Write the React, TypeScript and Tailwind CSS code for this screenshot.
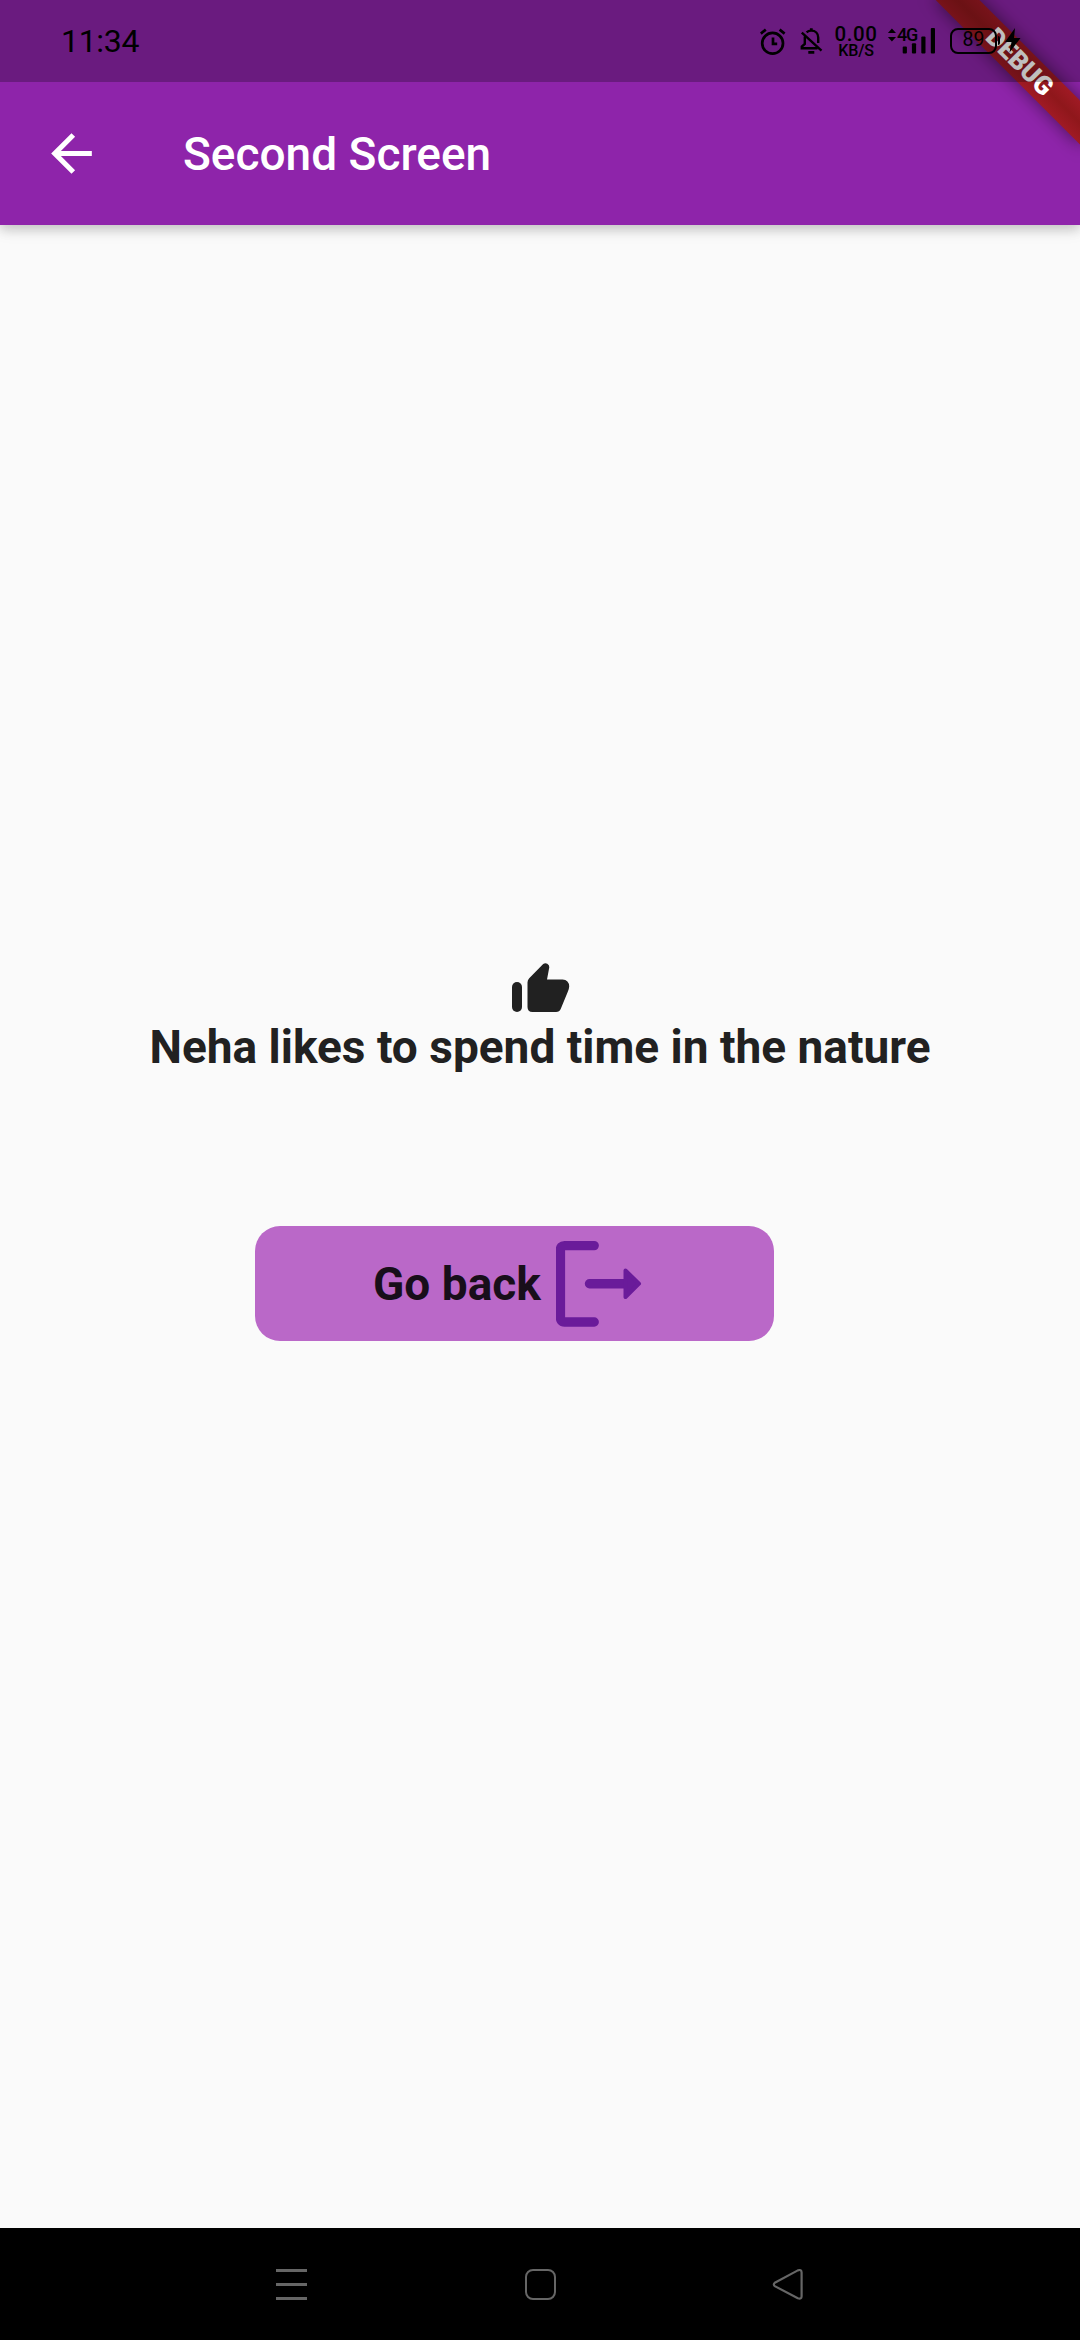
import React from "react";

function StatusBar() {
  return (
    <div className="relative z-20 flex h-[82px] items-start bg-black/25 text-black">
      <span className="ml-[61px] mt-[22px] w-[99px] text-[32px] leading-[38px] -tracking-[0.3px]">11:34</span>
      <div className="ml-[600px] mt-[27px] flex items-start">
        <svg width="26" height="30" viewBox="0 0 26 30" fill="none" stroke="currentColor" strokeWidth="2.7">
          <circle cx="12.6" cy="16.3" r="10.4" />
          <path d="M13 10.5V16.8H17.2M.8 6.6 5.8 2.6M24.6 6.6 19.6 2.6" />
        </svg>
        <svg className="ml-[14px]" width="24" height="30" viewBox="0 0 24 30" fill="none" stroke="currentColor" strokeWidth="2.4">
          <path d="M6.6 5.4C8 4 9.4 3.6 11.3 3.6C15.4 3.6 18.2 6.6 18.2 10.5V16M4.8 9.5V17L1.8 19.6V21.2H17.5M1.8 5.6 21.5 23.6" />
          <path d="M11.3 1.2V4M8.3 25.4H14.3" strokeWidth="2.8" />
        </svg>
        <div className="ml-[10px] flex w-[44px] flex-col items-center font-medium">
          <span className="text-[20.5px] leading-[15px] tracking-[0.6px]">0.00</span>
          <span className="mt-[3px] text-[16px] leading-[12px] -tracking-[0.2px]">KB/S</span>
        </div>
        <div className="relative ml-[9px] h-[28px] w-[50px]">
          <svg width="50" height="28" viewBox="0 0 50 28" fill="currentColor">
            <path d="M4.9 1.5 9 6H.9ZM4.9 14.5 9 10H.9Z" />
            <rect x="15.7" y="19.5" width="4.2" height="7" rx="1" />
            <rect x="24.9" y="16.3" width="4.2" height="10.2" rx="1" />
            <rect x="34.3" y="9.5" width="4.2" height="17" rx="1" />
            <rect x="43.8" y="1" width="4.2" height="25.5" rx="1" />
          </svg>
          <span className="absolute left-[10px] top-[1px] text-[18px] font-medium leading-[14px] -tracking-[1.2px]">4G</span>
        </div>
        <div className="ml-[13px] mt-[1px] flex h-[26px] w-[47px] items-center justify-center rounded-[8px] border-[2.5px] border-black pb-[2px] text-[19.5px] leading-none">
          89
        </div>
        <div className="ml-[1px] mt-[9px] h-[9px] w-[2px] rounded-r bg-black" />
        <svg className="ml-[5px] mt-[1px]" width="16" height="25" viewBox="0 0 16 25" fill="currentColor">
          <path d="M10 0 0 14H6.5L4.5 24.5 15.5 10H9Z" />
        </svg>
      </div>
    </div>
  );
}

function DebugBanner() {
  return (
    <div className="absolute right-0 top-0 z-10 h-[225px] w-[300px] overflow-hidden">
      <div className="absolute left-[137px] top-[46px] h-[31px] w-[204px] rotate-45 bg-black/50 blur-[9px]" />
      <div className="absolute left-[137px] top-[46px] flex h-[31px] w-[204px] rotate-45 items-center justify-center bg-[linear-gradient(#a01a24,#8f171b_50%,#a01a24)] text-[26px] font-black leading-none text-white">
        <span className="translate-x-[1px] -translate-y-[1px]">DEBUG</span>
      </div>
    </div>
  );
}

export default function App() {
  return (
    <div className="relative flex h-[2340px] w-[1080px] flex-col overflow-hidden bg-[#fafafa] font-['Roboto',sans-serif]">
      <header className="relative h-[225px] shrink-0 bg-[#8e24aa] shadow-[0_5px_10px_rgba(0,0,0,0.14),0_2px_18px_rgba(0,0,0,0.12)]">
        <StatusBar />
        <div className="flex h-[143px] items-center">
          <svg className="ml-[41px]" width="61" height="61" viewBox="0 0 24 24" fill="#fff">
            <path d="M20 11H7.83l5.59-5.59L12 4l-8 8 8 8 1.41-1.41L7.83 13H20v-2z" />
          </svg>
          <h1 className="ml-[81px] text-[46px] font-medium leading-[54px] text-white">Second Screen</h1>
        </div>
        <DebugBanner />
      </header>
      <main className="flex flex-1 flex-col items-center pt-[732px]">
        <svg width="62" height="62" viewBox="0 0 62 62" fill="#212121">
          <rect x="3" y="25" width="10" height="30" rx="5" />
          <path d="M18.5 25.5Q18.5 23 20.2 21.3L34.2 7.1A3.8 3.8 0 0 1 40.3 10.3L38 22.4H53.5Q60 22.6 60.2 29.5Q60 32 59 34.3L51.8 51.8Q50.5 55 47 55H23.5Q18.5 55 18.5 50Z" />
        </svg>
        <p className="mt-[1px] text-[46px] font-bold leading-[54px] text-[#212121]">Neha likes to spend time in the nature</p>
        <button className="mr-[51px] mt-[152px] flex h-[115px] w-[519px] items-center rounded-[25px] bg-[#ba68c8]">
          <span className="ml-[118px] w-[183px] text-left text-[46px] font-bold leading-[54px] text-[#180e1a]">Go back</span>
          <svg width="90" height="90" viewBox="0 0 90 90" fill="none" stroke="#6a1b9a" strokeWidth="9.4" strokeLinecap="round">
            <path d="M38.2 6.6H8.5Q4.4 6.6 4.4 11V78Q4.4 83 8.5 83H38.2" />
            <path d="M33.5 44.7H70" />
            <path d="M69.5 31.5 83 44.7 69.5 58Z" fill="#6a1b9a" strokeWidth="4" strokeLinejoin="round" />
          </svg>
        </button>
      </main>
      <nav className="flex h-[112px] shrink-0 items-center justify-center gap-[216px] bg-black">
        <svg width="32" height="32" viewBox="0 0 32 32" stroke="#666" strokeWidth="2.8">
          <path d="M0 2.5H31M0 16.5H31M0 30.5H31" />
        </svg>
        <svg width="32" height="32" viewBox="0 0 32 32" fill="none" stroke="#666" strokeWidth="2">
          <rect x="2" y="2" width="29" height="29" rx="7" />
        </svg>
        <svg width="32" height="32" viewBox="0 0 32 32" fill="none" stroke="#666" strokeWidth="2.2">
          <path d="M2.8 14.7 25.8 2.4Q29.6 1 29.6 4.5V28.2Q29.6 31.6 25.8 30.2L2.8 18.2Q.8 16.5 2.8 14.7Z" />
        </svg>
      </nav>
    </div>
  );
}
